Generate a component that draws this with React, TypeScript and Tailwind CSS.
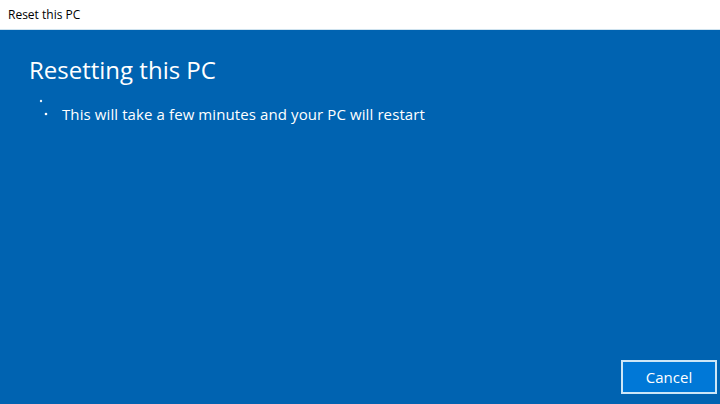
import React from 'react';

// Spinner made of small dots, like the Windows "working" indicator
function Dots() {
  return (
    <svg width="12" height="20" viewBox="0 0 12 20" className="shrink-0">
      <circle cx="3" cy="2" r="1.2" fill="#ffffff" opacity="0.9" />
      <circle cx="8" cy="15" r="1.3" fill="#ffffff" />
    </svg>
  );
}

export default function App() {
  return (
    <div
      className="w-[720px] h-[404px] flex flex-col overflow-hidden"
      style={{ fontFamily: '"Open Sans", "Noto Sans", sans-serif' }}
    >
      <div className="h-[30px] bg-white flex items-center px-[8px] text-[12px] text-black shrink-0 border-b border-[#cfe3ef]">
        Reset this PC
      </div>
      <div className="flex-1 bg-[#0063b1] flex flex-col">
        <div className="pl-[29px] pt-[24px] text-[24px] leading-[32px] text-white">Resetting this PC</div>
        <div className="flex items-start pl-[38px] pt-[13px] gap-[12px]">
          <Dots />
          <div className="text-[15px] leading-[20px] text-white pt-[5px] tracking-[0.1px]">
            This will take a few minutes and your PC will restart
          </div>
        </div>
        <div className="flex-1" />
        <div className="flex justify-end pr-[3px] pb-[10px]">
          <button className="w-[96px] h-[34px] border-2 border-[#cde6f7] bg-[#0078d7] text-white text-[15px]">
            Cancel
          </button>
        </div>
      </div>
    </div>
  );
}
